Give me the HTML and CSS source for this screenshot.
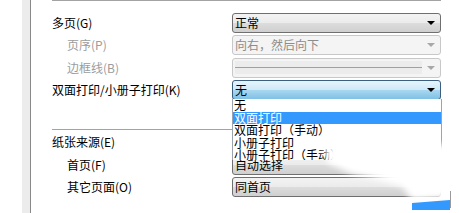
FILE: index.html
```html
<!DOCTYPE html>
<html lang="zh-CN">
<head>
    <meta charset="UTF-8">
    <title>打印设置</title>
    <link rel="stylesheet" href="styles.css">
</head>
<body>

<div class="page">
    <div class="strip"></div>

    <div class="panel">
        <div class="section top-line">
            <div class="row">
                <span class="label">多页(G)</span>
                <div class="combo"><span>正常</span><i class="arrow"></i></div>
            </div>
            <div class="row">
                <span class="label sub disabled">页序(P)</span>
                <div class="combo off"><span>向右，然后向下</span><i class="arrow"></i></div>
            </div>
            <div class="row">
                <span class="label sub disabled">边框线(B)</span>
                <div class="combo off"><span class="line-box"><b></b></span><i class="arrow"></i></div>
            </div>
            <div class="row">
                <span class="label">双面打印/小册子打印(K)</span>
                <div class="combo focus">
                    <span>无</span><i class="arrow"></i>
                    <ul class="drop-list">
                        <li>无</li>
                        <li class="selected">双面打印</li>
                        <li>双面打印（手动）</li>
                        <li>小册子打印</li>
                        <li>小册子打印（手动）</li>
                    </ul>
                </div>
            </div>
        </div>

        <div class="section sep-line">
            <div class="row">
                <span class="label">纸张来源(E)</span>
            </div>
            <div class="row">
                <span class="label sub">首页(F)</span>
                <div class="combo"><span>自动选择</span><i class="arrow"></i></div>
            </div>
            <div class="row">
                <span class="label sub">其它页面(O)</span>
                <div class="combo"><span>同首页</span><i class="arrow"></i></div>
            </div>
        </div>
    </div>

    <!-- erased corner of the screenshot -->
    <div class="smear"><div class="smear-fill"></div></div>
    <div class="corner-btn"></div>
    <div class="corner-edge"></div>
</div>

</body>
</html>
```

FILE: styles.css
```css
* {
    margin: 0;
    padding: 0;
    box-sizing: border-box;
}

body {
    background: #fff;
    font-family: "Noto Sans CJK SC", "DejaVu Sans", sans-serif;
    font-size: 12px;
    color: #000;
    width: 459px;
    height: 213px;
    overflow: hidden;
}

.page {
    position: relative;
    display: flex;
    height: 213px;
    padding-left: 22px;
}

.strip {
    width: 9px;
    background: #ececec;
    border-right: 1px solid #8a8a8a;
}

.panel {
    padding-left: 21px;
    width: 410px;
}

.section {
    width: 389px;
}

.top-line {
    border-top: 1px solid #a3a3a3;
    padding-top: 11.5px;
}

.sep-line {
    margin-top: 29px;
    border-top: 1px solid #a3a3a3;
    padding-top: 2px;
}

.row {
    display: flex;
    align-items: center;
    height: 20px;
    margin-bottom: 2.5px;
}

.label {
    width: 180px;
    flex: none;
    line-height: 20px;
    white-space: nowrap;
}

.label.sub {
    padding-left: 15px;
}

.label.disabled {
    color: #9c9c9c;
}

.combo {
    position: relative;
    width: 209px;
    height: 20px;
    display: flex;
    align-items: center;
    padding-left: 2px;
    border: 1px solid #6f6f6f;
    border-radius: 3px;
    background: linear-gradient(#f3f3f3, #ebebeb 50%, #dddddd 50%, #cfcfcf);
    line-height: 18px;
    white-space: nowrap;
}

.combo .arrow {
    position: absolute;
    right: 5px;
    top: 7px;
    width: 0;
    height: 0;
    border-left: 4px solid transparent;
    border-right: 4px solid transparent;
    border-top: 4px solid #000;
}

.combo.off {
    border-color: #c8c8c8;
    background: #f4f4f4;
    color: #8d8d8d;
}

.combo.off .arrow {
    border-top-color: #a8a8a8;
}

.line-box {
    display: flex;
    align-items: center;
    width: 187px;
    height: 13px;
    background: #ececec;
}

.line-box b {
    display: block;
    width: 100%;
    height: 1px;
    background: #a0a0a0;
}

.combo.focus {
    border-color: #3b5f7e;
    background: linear-gradient(#e6f4fc, #cde9f8 50%, #a9d8f1 50%, #7fc0e4);
}

.drop-list {
    position: absolute;
    top: 18px;
    left: -1px;
    width: 210px;
    height: 61px;
    overflow: hidden;
    list-style: none;
    background: #fff;
    border-left: 1px solid #9aa4b0;
    border-right: 1px solid #9aa4b0;
    z-index: 2;
}

.drop-list li {
    height: 12.5px;
    line-height: 12.5px;
    font-size: 12px;
    padding-left: 1px;
}

.drop-list li.selected {
    background: #3399ff;
    color: #fff;
}

.smear {
    position: absolute;
    left: 0;
    top: 0;
    width: 459px;
    height: 213px;
    filter: blur(3px);
    z-index: 3;
    pointer-events: none;
}

.smear-fill {
    width: 100%;
    height: 100%;
    background: #fff;
    clip-path: polygon(324px 147px, 470px 144px, 470px 196px, 412px 200px, 402px 186px, 372px 178px, 352px 174px, 328px 163px);
}

.corner-btn {
    position: absolute;
    left: 412px;
    top: 200px;
    width: 38px;
    height: 10px;
    background: #3399ff;
    clip-path: polygon(0 3px, 38px 0, 38px 10px, 0 10px);
    filter: blur(0.6px);
    z-index: 4;
}

.corner-edge {
    position: absolute;
    left: 450px;
    top: 191px;
    width: 1px;
    height: 17px;
    background: #9a9a9a;
    z-index: 4;
}
```
